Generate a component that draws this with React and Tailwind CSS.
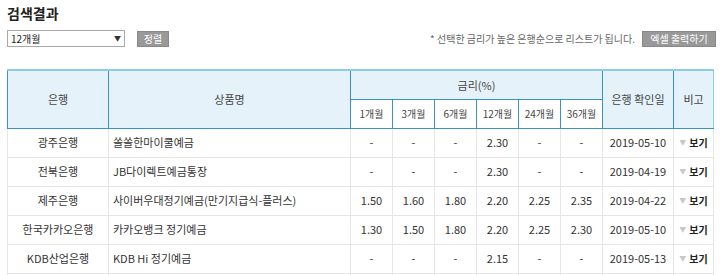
const rows = [
  { bank: '광주은행', name: '쏠쏠한마이쿨예금', rates: ['-', '-', '-', '2.30', '-', '-'], date: '2019-05-10' },
  { bank: '전북은행', name: 'JB다이렉트예금통장', rates: ['-', '-', '-', '2.30', '-', '-'], date: '2019-04-19' },
  { bank: '제주은행', name: '사이버우대정기예금(만기지급식-플러스)', rates: ['1.50', '1.60', '1.80', '2.20', '2.25', '2.35'], date: '2019-04-22' },
  { bank: '한국카카오은행', name: '카카오뱅크 정기예금', rates: ['1.30', '1.50', '1.80', '2.20', '2.25', '2.30'], date: '2019-05-10' },
  { bank: 'KDB산업은행', name: 'KDB Hi 정기예금', rates: ['-', '-', '-', '2.15', '-', '-'], date: '2019-05-13' },
]

const terms = ['1개월', '3개월', '6개월', '12개월', '24개월', '36개월']

const App = () => {
  return (
    <div className="w-[720px] h-[275px] overflow-hidden bg-white text-[#333] font-['Noto_Sans_CJK_KR','Noto_Sans',sans-serif]">
      {/* Title */}
      <h2 className="pl-[7px] pt-[3px] h-[27px] text-[14px] font-bold text-[#222] leading-[20px]">검색결과</h2>

      {/* Controls */}
      <div className="flex items-center pl-[7px] pr-[4px] h-[17px] mt-[3px]">
        <div className="w-[118px] h-[17px] border border-[#a9a9a9] flex items-center justify-between px-[3px] text-[10px] text-[#222]">
          <span>12개월</span>
          <span className="text-[7px] text-[#333]">▼</span>
        </div>
        <button className="ml-[12px] w-[32px] h-[16px] bg-[#999] border border-[#888] text-white text-[10px] leading-none">정렬</button>
        <span className="ml-auto text-[10px] text-[#666]">* 선택한 금리가 높은 은행순으로 리스트가 됩니다.</span>
        <button className="ml-[7px] w-[74px] h-[16px] bg-[#999] border border-[#888] text-white text-[10px] leading-none">엑셀 출력하기</button>
      </div>

      {/* Table */}
      <table className="mt-[22px] ml-[7px] w-[706px] border-collapse table-fixed text-[11px]">
        <colgroup>
          <col className="w-[101px]" />
          <col className="w-[242px]" />
          {terms.map((t) => (
            <col key={t} className="w-[42px]" />
          ))}
          <col className="w-[71px]" />
          <col className="w-[40px]" />
        </colgroup>
        <thead className="bg-[#e6f2f9] text-[#444]">
          <tr className="h-[29px] border-t-2 border-t-[#8ccbec]">
            <th rowSpan={2} className="font-normal border-l border-l-[#3b90c4] border-r border-r-[#3b90c4] border-b border-b-[#3b90c4]">은행</th>
            <th rowSpan={2} className="font-normal border-r border-r-[#3b90c4] border-b border-b-[#3b90c4]">상품명</th>
            <th colSpan={6} className="font-normal border-r border-r-[#3b90c4] border-b border-b-[#3b90c4]">금리(%)</th>
            <th rowSpan={2} className="font-normal border-r border-r-[#3b90c4] border-b border-b-[#3b90c4]">은행 확인일</th>
            <th rowSpan={2} className="font-normal border-r border-r-[#8ccbec] border-b border-b-[#3b90c4]">비고</th>
          </tr>
          <tr className="h-[29px] bg-white">
            {terms.map((t) => (
              <th key={t} className="font-normal text-[10px] border-r border-r-[#3b90c4] border-b border-b-[#3b90c4]">{t}</th>
            ))}
          </tr>
        </thead>
        <tbody>
          {rows.map((row) => (
            <tr key={row.bank} className="h-[29px] border-b border-b-[#e6e6e6]">
              <td className="text-center border-l border-l-[#e6e6e6] border-r border-r-[#e6e6e6]">{row.bank}</td>
              <td className="pl-[4px] border-r border-r-[#e6e6e6] whitespace-nowrap">{row.name}</td>
              {row.rates.map((r, i) => (
                <td key={i} className="text-center border-r border-r-[#e6e6e6]">{r}</td>
              ))}
              <td className="text-center border-r border-r-[#e6e6e6]">{row.date}</td>
              <td className="border-r border-r-[#e6e6e6]">
                <span className="flex items-center justify-center gap-[3px] font-bold text-[10px] text-[#222]">
                  <span className="text-[7px] text-[#c8c8c8] font-normal">▼</span>
                  보기
                </span>
              </td>
            </tr>
          ))}
          {/* next row continues below the fold */}
          <tr className="h-[29px]">
            <td className="border-l border-l-[#e6e6e6] border-r border-r-[#e6e6e6]" />
            <td className="border-r border-r-[#e6e6e6]" />
            {terms.map((t) => (
              <td key={t} className="border-r border-r-[#e6e6e6]" />
            ))}
            <td className="border-r border-r-[#e6e6e6]" />
            <td className="border-r border-r-[#e6e6e6]" />
          </tr>
        </tbody>
      </table>
    </div>
  )
}

export default App
